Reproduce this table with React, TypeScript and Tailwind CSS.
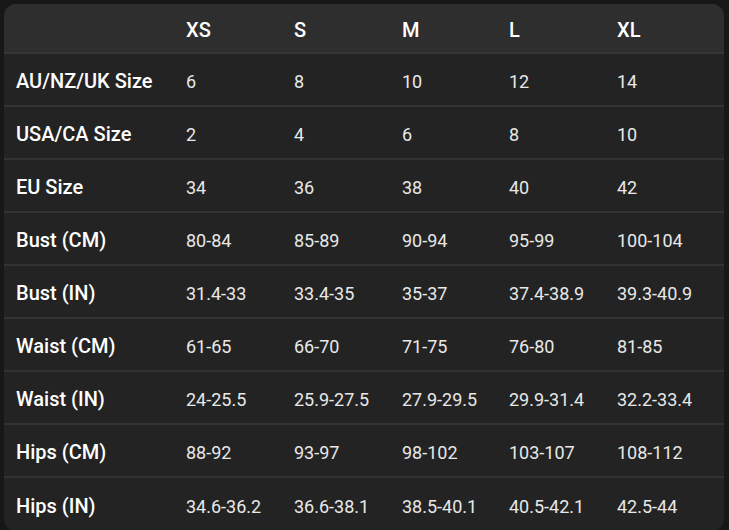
const sizes = ["XS", "S", "M", "L", "XL"];

const rows: [string, string[]][] = [
  ["AU/NZ/UK Size", ["6", "8", "10", "12", "14"]],
  ["USA/CA Size", ["2", "4", "6", "8", "10"]],
  ["EU Size", ["34", "36", "38", "40", "42"]],
  ["Bust (CM)", ["80-84", "85-89", "90-94", "95-99", "100-104"]],
  ["Bust (IN)", ["31.4-33", "33.4-35", "35-37", "37.4-38.9", "39.3-40.9"]],
  ["Waist (CM)", ["61-65", "66-70", "71-75", "76-80", "81-85"]],
  ["Waist (IN)", ["24-25.5", "25.9-27.5", "27.9-29.5", "29.9-31.4", "32.2-33.4"]],
  ["Hips (CM)", ["88-92", "93-97", "98-102", "103-107", "108-112"]],
  ["Hips (IN)", ["34.6-36.2", "36.6-38.1", "38.5-40.1", "40.5-42.1", "42.5-44"]],
];

const cols = "grid grid-cols-[170px_108px_108px_107px_108px_1fr]";

const App = () => {
  return (
    <div className="w-[729px] h-[530px] overflow-hidden bg-[#171717] pt-1 pl-1 pr-[5px] font-['Roboto',sans-serif]">
      <div className="rounded-[12px] overflow-hidden bg-[#232323]">
        <div className={`${cols} h-[50px] items-center pt-[3px] bg-[#2e2e2f] border-b-2 border-[#353535]`}>
          <div></div>
          {sizes.map((s) => (
            <div key={s} className="pl-3 text-white text-[20px] font-medium">{s}</div>
          ))}
        </div>
        {rows.map(([label, vals], r) => (
          <div
            key={label}
            className={`${cols} h-[53px] items-center pt-[3px] ${r < rows.length - 1 ? "border-b-2 border-[#333333]" : ""}`}
          >
            <div className="pl-3 text-white text-[20px] font-medium">{label}</div>
            {vals.map((v, i) => (
              <div key={i} className="pl-3 text-[#e8e8e8] text-[18px]">{v}</div>
            ))}
          </div>
        ))}
      </div>
    </div>
  );
};

export default App;
